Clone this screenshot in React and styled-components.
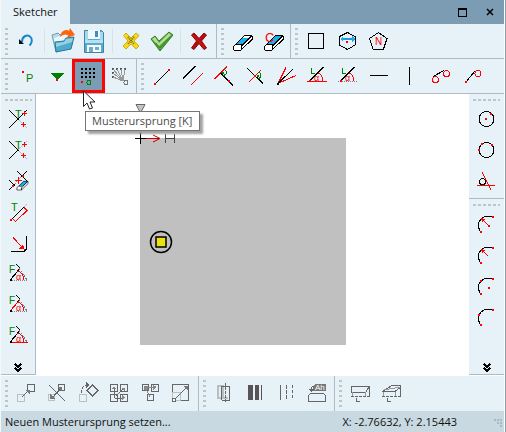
import React from "react";
import styled, { createGlobalStyle } from "styled-components";

const GlobalStyle = createGlobalStyle`
  * { box-sizing: border-box; }
  body { margin: 0; background: #ffffff; }
`;

const c = {
  bar: "#e7f2f8",
  title: "#7b9cb2",
  status: "#c8d9e2",
  line: "#aebbc2",
  grip: "#bcc5ca",
};

const Window = styled.div`
  display: flex;
  flex-direction: column;
  min-height: 100vh;
  padding-right: 1px;
  border-left: 1px solid #f4f8fa;
  border-right: 1px solid #8ca2af;
  background: #ffffff;
  color: #111111;
  font: 11px/16px "Open Sans", "Noto Sans", sans-serif;
`;

const TitleBar = styled.header`
  display: flex;
  align-items: stretch;
  height: 24px;
  background: ${c.title};
`;

const Tab = styled.h1`
  margin: 0;
  width: 69px;
  padding: 4px 0 0 12px;
  background: ${c.bar};
  font: inherit;
`;

const WindowControls = styled.div`
  display: flex;
  gap: 8px;
  margin-left: auto;
  padding-right: 4px;
`;

const WindowButton = styled.button`
  display: flex;
  align-items: center;
  justify-content: center;
  width: 20px;
  padding: 0;
  border: 0;
  background: none;
`;

const ToolRow = styled.div`
  display: flex;
  height: 35px;
  background: ${c.bar};
  border-bottom: ${(p) => (p.$plain ? "0" : `1px solid ${c.line}`)};
`;

const ToolGroup = styled.div`
  display: flex;
  align-items: center;
  padding: 0 1px 0 4px;
  border-right: ${(p) => (p.$last ? "0" : `1px solid ${c.line}`)};
`;

const Grip = styled.span`
  flex: none;
  width: 3px;
  height: 27px;
  margin-right: 3px;
  background: repeating-linear-gradient(to bottom, ${c.grip} 0 2px, transparent 2px 5px);
`;

const SideGrip = styled.span`
  flex: none;
  width: 27px;
  height: 2px;
  margin: 5px 0 3px;
  background: repeating-linear-gradient(to right, ${c.grip} 0 3px, transparent 3px 5px);
`;

const Divider = styled.span`
  width: 1px;
  height: 24px;
  margin: 0 3px 0 2px;
  background: #d9e1e4;
`;

const ToolButton = styled.button`
  display: block;
  flex: none;
  padding: 0;
  border: 0;
  background: ${(p) => (p.$active ? c.title : "none")};
  outline: ${(p) => (p.$active ? "3px solid #fb0505" : "none")};
  outline-offset: -2px;

  svg { display: block; }
`;

const ActiveTool = styled.div`
  position: relative;
  z-index: 1;
`;

const Pointer = styled.svg`
  position: absolute;
  left: 10px;
  top: 30px;
  z-index: 2;
`;

const Tooltip = styled.div`
  position: absolute;
  left: 12px;
  top: 51px;
  padding: 0 7px 0 6px;
  border: 1px solid #767676;
  background: #ffffff;
  box-shadow: 3px 3px 2px #a3a3a3;
  color: #4c4c4c;
  line-height: 18px;
  white-space: nowrap;
`;

const Workspace = styled.main`
  display: flex;
  flex: 1;
  min-height: 282px;
  padding-bottom: 1px;
`;

const SidePanel = styled.aside`
  display: flex;
  flex-direction: column;
  width: 35px;
  background: ${c.bar};
  border-right: ${(p) => (p.$left ? `1px solid ${c.line}` : "0")};
  border-bottom: 1px solid ${c.line};
`;

const SideGroup = styled.div`
  display: flex;
  flex-direction: column;
  align-items: center;
  padding-bottom: 1px;
  border-bottom: ${(p) => (p.$last ? "0" : `1px solid ${c.line}`)};
`;

const MoreButton = styled.button`
  align-self: center;
  margin-top: auto;
  padding: 1px 4px;
  border: 0;
  background: none;

  svg { display: block; }
`;

const Canvas = styled.section`
  flex: 1;
  min-width: 0;
  overflow: hidden;
  background: #ffffff;

  svg { display: block; }
`;

const StatusBar = styled.footer`
  display: flex;
  align-items: center;
  height: 21px;
  padding: 0 2px 0 4px;
  background: ${c.status};
`;

const Coordinates = styled.span`
  margin-left: auto;
  margin-right: 37px;
`;

const R = "#f00";
const K = "#000";
const G = "#008000";
const D = "#666";
const L = "#b9bfc2";

const Ln = ({ d, c: color = K, w = 1, dash }) => (
  <path d={d} stroke={color} strokeWidth={w} strokeDasharray={dash} fill="none" />
);
const Dot = ({ x, y, c: color = R }) => <rect x={x - 1} y={y - 1} width="2" height="2" fill={color} />;
const Plus = ({ x, y }) => <Ln c={R} d={`M${x - 2} ${y + 0.5}h5M${x + 0.5} ${y - 2}v5`} />;
const Char = ({ x, y, c: color = G, size = 11, children }) => (
  <text x={x} y={y} fill={color} fontSize={size} fontFamily="Liberation Sans, sans-serif">{children}</text>
);
const Sq = ({ x, y, s = 7, c: color = D }) => (
  <rect x={x + 0.5} y={y + 0.5} width={s} height={s} stroke={color} fill="none" />
);

const Eraser = ({ light }) => (
  <g stroke="#000" strokeLinejoin="round">
    <path d="M6.500 21.500L17.500 10.500H25L14 21.500z" fill="#17aeea" />
    {!light && <path d="M18 10.500H25l-2 2h-7z" fill="#fff" stroke="none" />}
    <path d="M14 21.500L25 10.500v4L14 25z" fill="#fff" />
    <path d="M6.500 21.500L9 19h7l-2 2.500V25H6.500z" fill="#fff" />
  </g>
);

const Angle = ({ dotted }) => (
  <>
    <Ln d="M7 21.500L21.500 7" />
    <Ln c={dotted ? "#888" : R} dash={dotted ? "1 1" : undefined} d="M5 21.500h20" />
    <Ln c={G} d="M9.500 8v5.500H13" />
    <Ln c={R} d="M16 13q5 2 5 8" />
    <Char x={12} y={21} c={R} size={9}>α</Char>
    <Dot x={8} y={21} />
  </>
);

const FaceAngle = ({ side = K, base }) => (
  <>
    <Ln d="M14 5l4 4-4 5" />
    <Ln c={side} d="M17 11L7.500 21.500" />
    <Ln c="#777" dash="2 1" d="M17 9l8 12" />
    <Ln c={base ? R : "#888"} dash={base ? undefined : "1 1"} d="M8 21.500h18" />
    <Ln c={R} d="M15 12q6 1 7 9" />
    <Char x={7} y={14} size={10}>F</Char>
    <Char x={14} y={21} c={R} size={9}>α</Char>
    <Dot x={9} y={21} c={K} />
  </>
);

const Arc = () => <Ln d="M9.500 23Q5 15 10 10Q15 5.500 22 8" />;

const icons = {
  undo: (
    <g shapeRendering="auto">
      <path d="M11 17C11 11 16 9.500 19 11.500C22 14 21 18 18.500 20.500" fill="none" stroke="#1787c9" strokeWidth="2" />
      <path d="M8 14v5h5z" fill="#001018" />
    </g>
  ),
  open: (
    <g shapeRendering="auto" strokeLinejoin="round">
      <path d="M4 10l6-2 2 2 10-3 2 13-16 7z" fill="#b9dbe9" stroke="#6c9fb8" />
      <path d="M6 13l17-5 1 9-16 6z" fill="#edf8fc" />
      <path d="M7 17l9-1 2-3 8-1-3 12-15 3z" fill="#4faacb" stroke="#277798" />
      <path d="M8 18l8-1 2-3 7-1-1 4-16 5z" fill="#94d1e4" />
      <path d="M12 12C13 5 19 4 21 6l1-3 5 7-8 3 1-3c-3-1-5-1-8 2z" fill="#ff650d" />
    </g>
  ),
  save: (
    <g shapeRendering="auto">
      <path d="M5.500 5.500h17l2 2v20h-19z" fill="#58abd0" stroke="#3986aa" />
      <path d="M6 6h3v9H6zM21 7h3v8h-3z" fill="#a6d8ec" />
      <path d="M9 5h12v9H9z" fill="#f1f8fb" />
      <path d="M16 6h3v6h-3z" fill="#438fb6" />
      <path d="M6 15h18v3H6z" fill="#b9e0f0" />
      <path d="M8 20h14v7H8z" fill="#f6fbfd" />
      <path d="M10 22h4v5h-4zM16 22h4v3h-4z" fill="#78aac3" />
    </g>
  ),
  cross: (
    <g shapeRendering="auto">
      <path d="M7.500 10.500l2.500-2.500 5 5 5-5 3 2.500-5 5.500 5 5-3 3-5-5-5 5-3-3 5-5z" fill="#f6d91b" stroke="#d1af14" />
      <path d="M12 12l6 7M18 12l-6 7" stroke="#7a6d14" strokeDasharray="1 1" strokeWidth="2" />
    </g>
  ),
  check: (
    <g shapeRendering="auto">
      <path d="M4 14l4-3 4 5L22 7l4 3-13 16z" fill="#55a53b" stroke="#397c2b" strokeLinejoin="round" />
      <path d="M5 14l3-2 4 6L22 8l2 2-12 11z" fill="#b4e090" />
      <path d="M9 18l4 5L24 11" stroke="#37862b" fill="none" />
    </g>
  ),
  cancel: (
    <g shapeRendering="auto">
      <path d="M7.500 10l2.500-2 5 5.500L20 8l2.500 2-5 6 5 7-2.500 1.500-5-6-5 6L7.500 23l5-7z" fill="#b80b0e" stroke="#8f0508" strokeLinejoin="round" />
      <path d="M9 10l12 13" stroke="#d61c20" />
    </g>
  ),
  erase: <Eraser />,
  eraseC: (<><Eraser light /><Char x={7} y={17} c={R} size={13}>C</Char></>),
  square: <rect x="7.500" y="8.500" width="15" height="15" fill="none" stroke="#000" />,
  hexagon: (
    <>
      <Ln d="M15.500 7.500l7.500 4v8.500l-7.500 4.500L7.500 20v-8.500z" />
      <Ln c="#169fe0" w={1.5} d="M8.500 14h13" />
      <path d="M8 14l3-3v6zM23 14l-3-3v6z" fill="#17aeea" />
      <Dot x={15} y={17} />
    </>
  ),
  polygon: (<><Ln d="M15.500 7.500l8.500 6-3.500 10.500H10L6.500 13.500z" /><Char x={12} y={20} c={R} size={10}>N</Char></>),

  point: (<><Dot x={12} y={12} /><Char x={15} y={22} size={11}>P</Char></>),
  plane: (<><path d="M8 13h14l-7 7z" fill={G} /><Dot x={15} y={20} /></>),
  pattern: (
    <>
      {[9, 13, 17].map((y) => [9, 13, 17, 21].map((x) => <Dot key={`${x}-${y}`} x={x} y={y} c={K} />))}
      <Dot x={9} y={22} />
      <circle cx="16" cy="22.500" r="2" fill="none" stroke={G} />
    </>
  ),
  fan: (
    <>
      {[9, 13, 17, 21].map((x) => <Dot key={x} x={x} y={9} c="#555" />)}
      <Dot x={9} y={13} c="#555" /><Dot x={9} y={17} c="#555" />
      <Ln c="#999" d="M9 9l10 12M13 9l6 12M17 9l2 12M21 9l-2 12M9 13l10 8M9 17l10 4" />
      <circle cx="22" cy="22.500" r="2" fill="none" stroke="#777" />
    </>
  ),
  line: (<><Ln d="M8 24L22 10" /><Dot x={8} y={24} /><Dot x={22} y={10} /></>),
  parallel: (<><Ln d="M5 18.500L17.500 6" /><Ln c={R} d="M12.500 25.500L25 13" /></>),
  perpendicular: (
    <>
      <Ln c={R} d="M5.500 19L18 6.500" /><Ln d="M11.500 13L24 25.500" />
      <Ln c={G} d="M15 9.500q3 1 2 4.500l-3 2" /><Dot x={14} y={13} c={G} /><Dot x={20} y={21} />
    </>
  ),
  crossing: (
    <>
      <Ln d="M7 8l16 15.500" /><Ln c={R} d="M9 22L21 10" />
      <Ln c={G} d="M18.500 12q3 1 2 5l-2 2" /><Dot x={18} y={16} c={G} /><Dot x={15} y={16} />
    </>
  ),
  rays: (<><Ln c={R} d="M7 23.500L15 7.500M7 23.500l18-8" /><Ln d="M7 23.500L22 9" /><Dot x={7} y={24} c={K} /></>),
  angle: <Angle />,
  angleDotted: <Angle dotted />,
  horizontal: <Ln d="M6 15.500h18" />,
  vertical: <Ln d="M14.500 7v18" />,
  tangent: (
    <>
      <Ln d="M7 16.500L18 10.500" />
      <circle cx="9.500" cy="19.500" r="3" fill="none" stroke={R} /><circle cx="20.500" cy="13.500" r="3" fill="none" stroke={R} />
    </>
  ),
  tangentPoint: (<><Ln d="M9 22l9-11" /><circle cx="21" cy="13.500" r="3" fill="none" stroke={R} /><Dot x={9} y={22} /></>),

  trim: (<><Ln d="M7 24L25 6M7 6l10 10" /><Ln c={L} d="M17 16l8 8" /><Char x={13} y={14}>T</Char><Plus x={22} y={9} /><Plus x={21} y={20} /></>),
  trimBoth: (<><Ln d="M7 24l9-9M7 6l10 10" /><Ln c={L} d="M16 15l9-9M17 16l8 8" /><Char x={13} y={14}>T</Char><Plus x={22} y={9} /><Plus x={21} y={20} /></>),
  trimErase: (
    <>
      <Ln d="M15 5l10 10M25 5l-6 6M7 14l6 6M7 24l6-6" /><Ln c="#999" dash="1 1" d="M19 11l-8 9" />
      <Ln c={R} d="M13 14.500h7M16.500 11v7" /><Dot x={21} y={10} /><Dot x={11} y={20} />
      <g transform="translate(11 9) scale(.6)"><Eraser light /></g>
    </>
  ),
  offset: (<><Char x={9} y={14}>T</Char><Ln d="M9 23l13-13" /><Ln c={L} d="M22 10l3-3" /><Ln c={R} d="M11 22l2.500 2.500L25 13.500l-3-3" /><Dot x={9} y={23} /></>),
  fillet: (<><Ln d="M9 23.500h11q4.500 0 4.500-4V8" /><Ln c={R} d="M11 9.500l10 10.500" /><path d="M22.500 21.500l-1.500-5-4 4z" fill={R} /></>),
  face1: <FaceAngle />,
  face2: <FaceAngle side={R} />,
  face3: <FaceAngle base />,

  circle: (<><circle cx="15.500" cy="15" r="7.500" fill="none" stroke={K} /><Dot x={15} y={15} /><Dot x={20} y={10} /></>),
  circle3: (<><circle cx="15.500" cy="15" r="7.500" fill="none" stroke={K} /><Dot x={8} y={15} /><Dot x={11} y={9} /><Dot x={21} y={10} /></>),
  circleTangent: (<><circle cx="11.500" cy="15.500" r="3" fill="none" stroke={K} /><Ln c={R} d="M6 19.500h18M11 6l9 18" /></>),
  arcRadius: (<><Arc /><Ln c={R} d="M18 17l-7-7" /><path d="M10 9l4 1-3 3z" fill={R} /><Dot x={18} y={17} /><Dot x={22} y={8} /><Dot x={10} y={23} /></>),
  arcRadiusFree: (<><Arc /><Ln c={R} d="M17 16l-6-6" /><path d="M10 9l4 1-3 3z" fill={R} /><Dot x={22} y={8} /><Dot x={10} y={23} /></>),
  arcCenter: (<><Arc /><Dot x={10} y={10} /><Dot x={18} y={17} /><Dot x={22} y={8} /><Dot x={10} y={23} /></>),
  arcPoints: (<><Arc /><Dot x={8} y={13} /><Dot x={22} y={8} /><Dot x={10} y={23} /></>),

  move: (<><Sq x={6} y={16} c={L} /><Sq x={16} y={6} /><Ln c={D} d="M11 19l6-6" /><path d="M18.500 11.500v5l-5-5z" fill="#777" /></>),
  mirror: (<><Sq x={6} y={16} s={6} c={L} /><Sq x={16} y={6} s={6} /><Ln c={D} d="M7 7l16 16M9 21L20 9" /><path d="M8 21v-5l5 5zM20 9v5l-4-5z" fill="#777" /></>),
  rotate: (<><Sq x={6} y={16} c={L} /><Ln c={D} d="M19.500 7l5.500 5.500-5.500 5.500-5.500-5.500z" /><Ln c={D} dash="3 1" d="M8.500 15Q8 8 14 7.500" /><path d="M13 4l4 3-4 3z" fill={D} /></>),
  array: (
    <>
      {[6, 16].map((y) => [6, 16].map((x) => <Sq key={`${x}-${y}`} x={x} y={y} />))}
      <Ln c={D} dash="2 1" d="M10 19V9M10 20L20 10M11 20h9" />
      <path d="M8 11h4l-2-3zM17 10h4v4zM18 17v5l3-2.500z" fill="#888" />
    </>
  ),
  circularArray: (
    <>
      <Sq x={7} y={6} s={6} /><Sq x={16} y={6} /><Sq x={12} y={16} s={6} />
      <Ln c="#888" d="M11 11l4 8M11 10l9-1" /><path d="M9 8h4v4H9zM18 7l4 2-4 3z" fill="#888" />
    </>
  ),
  scale: (<><Sq x={6} y={6} s={16} /><Sq x={6} y={14} s={8} c={L} /><Ln c={D} d="M8 22L20 10" /><path d="M22 8v5l-5-5z" fill="#777" /><rect x="6" y="20" width="3" height="3" fill="#fff" stroke={D} /></>),

  section: (<><Ln c={L} w={2} d="M9 8h5v12H9zM12 20h7" /><Ln c={D} d="M12.500 22V8h8v14h-8" /><Ln c={D} dash="3 1" d="M16.500 5v19" /></>),
  bars: <path d="M8 7h5v15H8zM15 7h4v15h-4zM21 7h1v15h-1z" fill="#555" />,
  dashes: (<><Ln c={D} d="M9.500 7v15" /><Ln c={D} dash="4 1" d="M15.500 7v15" /><Ln c={D} dash="3 2" d="M21.500 7v15" /></>),
  label: (
    <>
      <path d="M6.500 23.500v-6l2-2h13l2 2v6z" fill="none" stroke={D} />
      <path d="M13 6h11v7H11V8z" fill="#777" /><Char x={13} y={12} c="#fff" size={8}>Ah</Char>
      <Ln c={D} d="M12 8q-3 0-3 4" /><path d="M7 11h5l-3 3z" fill={D} />
    </>
  ),
  box: (<><Ln c={D} d="M6 8.500h18.500V18M6 8v6h15l3-5" /><Ln c="#999" d="M7.500 14v4M20.500 14v4" /><Ln c={D} dash="3 1" d="M6 18.500h19" /><Ln c={D} d="M11.500 20v3.500h3" /></>),
  wedge: (<><Ln c={D} d="M6 13.500l10-6h8.500V18M6 13.500h13l5-4" /><Ln c="#999" d="M7.500 14v4M19.500 14v4M8 12l16-3" /><Ln c={D} dash="3 1" d="M6 18.500h19" /><Ln c={D} d="M11.500 20v3.500h3" /></>),
};

const Tool = ({ name, label, side, active }) => (
  <ToolButton type="button" aria-label={label} aria-pressed={active} $active={active}>
    <svg width={side ? 32 : 31} height={side ? 31 : 32} shapeRendering="crispEdges" aria-hidden="true">
      {icons[name]}
    </svg>
  </ToolButton>
);

const HoveredTool = (props) => (
  <ActiveTool>
    <Tool {...props} active />
    <Tooltip role="tooltip">Musterursprung [K]</Tooltip>
    <Pointer width="13" height="20" aria-hidden="true">
      <path d="M.5 1v15.500l3.500-3.500 2.500 6 3-1-2.500-6H12z" fill="#fff" stroke="#222" />
    </Pointer>
  </ActiveTool>
);

const Group = ({ items, last }) => (
  <ToolGroup role="group" $last={last}>
    <Grip />
    {items.map((item, i) => {
      if (!item) return <Divider key={i} />;
      const [name, label, hovered] = item;
      return hovered ? <HoveredTool key={name} name={name} label={label} /> : <Tool key={name} name={name} label={label} />;
    })}
  </ToolGroup>
);

const Row = ({ groups, plain }) => (
  <ToolRow role="toolbar" $plain={plain}>
    {groups.map((items, i) => <Group key={i} items={items} last={i === groups.length - 1} />)}
  </ToolRow>
);

const More = () => (
  <MoreButton type="button" aria-label="Weitere Werkzeuge">
    <svg width="8" height="10" shapeRendering="crispEdges" aria-hidden="true">
      <path d="M1 1l3 3 3-3M1 5l3 3 3-3" fill="none" stroke="#000" strokeWidth="1.500" />
    </svg>
  </MoreButton>
);

const Panel = ({ groups, left }) => (
  <SidePanel $left={left}>
    {groups.map((items, i) => (
      <SideGroup key={i} role="group" $last={i === groups.length - 1}>
        <SideGrip />
        {items.map(([name, label]) => <Tool key={name} name={name} label={label} side />)}
      </SideGroup>
    ))}
    <More />
  </SidePanel>
);

const editTools = [
  [["undo", "Rückgängig"], null, ["open", "Öffnen"], ["save", "Speichern"], null, ["cross", "Alles verwerfen"], ["check", "Übernehmen"], null, ["cancel", "Abbrechen"]],
  [["erase", "Löschen"], ["eraseC", "Bedingungen löschen"]],
  [["square", "Rechteck"], ["hexagon", "Sechseck"], ["polygon", "N-Eck"]],
];

const drawTools = [
  [["point", "Punkt"], ["plane", "Ebene"], ["pattern", "Musterursprung", true], ["fan", "Musterpunkte"]],
  [["line", "Linie"], ["parallel", "Parallele"], ["perpendicular", "Senkrechte"], ["crossing", "Lot"], ["rays", "Winkelhalbierende"], ["angle", "Winkellinie"], ["angleDotted", "Winkel zur Achse"], ["horizontal", "Horizontale"], ["vertical", "Vertikale"], ["tangent", "Tangente"], ["tangentPoint", "Tangente durch Punkt"]],
];

const trimTools = [
  [["trim", "Trimmen"], ["trimBoth", "Beide trimmen"], ["trimErase", "Teilstück löschen"], ["offset", "Versatz"], ["fillet", "Verrunden"], ["face1", "Fase mit Winkel"], ["face2", "Fase zur Seite"], ["face3", "Fase zur Basis"]],
];

const arcTools = [
  [["circle", "Kreis"], ["circle3", "Kreis durch drei Punkte"], ["circleTangent", "Tangentialer Kreis"]],
  [["arcRadius", "Bogen mit Radius"], ["arcRadiusFree", "Bogen mit freiem Radius"], ["arcCenter", "Bogen mit Mittelpunkt"], ["arcPoints", "Bogen durch Punkte"]],
];

const changeTools = [
  [["move", "Verschieben"], ["mirror", "Spiegeln"], ["rotate", "Drehen"], ["array", "Rechteckmuster"], ["circularArray", "Kreismuster"], ["scale", "Skalieren"]],
  [["section", "Schnitt"], ["bars", "Linienstärke"], ["dashes", "Linienart"], ["label", "Beschriftung"]],
  [["box", "Profil"], ["wedge", "Schräges Profil"]],
];

const Sketch = () => (
  <svg width="433" height="281" role="img" aria-label="Skizze">
    <rect x="104" y="44" width="206" height="207" fill="#c0c0c0" />
    <path d="M100 10.500h9L104.500 19z" fill="#c4c4c4" stroke="#666" />
    <path d="M104.500 34v6" stroke="#008000" strokeWidth="2" />
    <path d="M99 44.500h11M104.500 38v12" stroke="#000" shapeRendering="crispEdges" />
    <path d="M110 44.500h13M117 41l7 3.500-7 3.500" fill="none" stroke="#c00000" />
    <path d="M129.500 40v9M138.500 40v9M130 44.500h8" stroke="#444" shapeRendering="crispEdges" />
    <circle cx="125" cy="148" r="10.500" fill="none" stroke="#000" strokeWidth="1.500" />
    <rect x="120" y="143" width="10" height="10" fill="#ede012" stroke="#000" strokeWidth="1.500" />
  </svg>
);

export default function App() {
  return (
    <Window>
      <GlobalStyle />
      <TitleBar>
        <Tab>Sketcher</Tab>
        <WindowControls>
          <WindowButton type="button" aria-label="Maximieren">
            <svg width="9" height="9" shapeRendering="crispEdges"><path d="M.5 1v7.500h8V1M0 1h9" fill="none" stroke="#000" /><path d="M0 0h9v2H0z" /></svg>
          </WindowButton>
          <WindowButton type="button" aria-label="Schließen">
            <svg width="8" height="8"><path d="M1 1l6 6M7 1L1 7" stroke="#000" strokeWidth="1.500" /></svg>
          </WindowButton>
        </WindowControls>
      </TitleBar>
      <Row groups={editTools} />
      <Row groups={drawTools} />
      <Workspace>
        <Panel groups={trimTools} left />
        <Canvas><Sketch /></Canvas>
        <Panel groups={arcTools} />
      </Workspace>
      <Row groups={changeTools} plain />
      <StatusBar>
        <span>Neuen Musterursprung setzen...</span>
        <Coordinates>X: -2.76632, Y: 2.15443</Coordinates>
        <svg width="8" height="12" shapeRendering="crispEdges" aria-hidden="true">
          <path d="M0 3h2v2H0zM3 3h2v2H3zM6 3h2v2H6zM3 6h2v2H3zM6 6h2v2H6zM6 9h2v2H6z" fill="#a8b8c1" />
        </svg>
      </StatusBar>
    </Window>
  );
}
